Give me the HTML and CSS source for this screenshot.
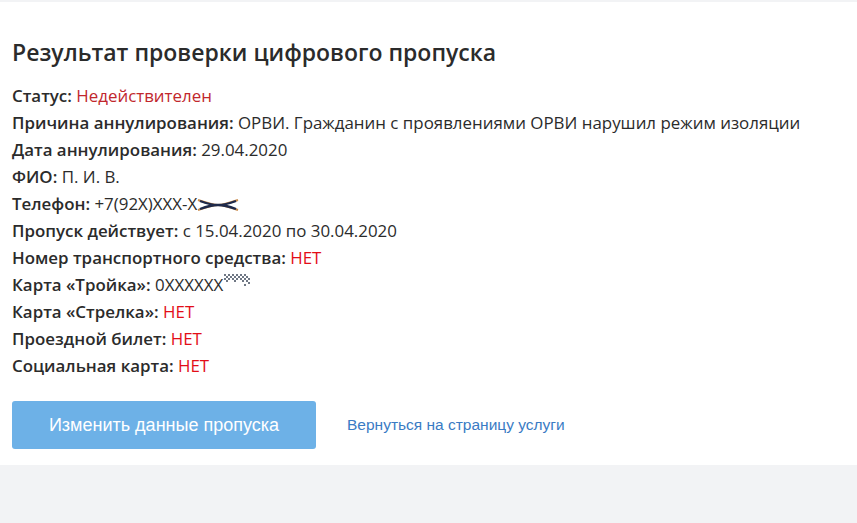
FILE: index.html
```html
<!DOCTYPE html>
<html lang="ru">
<head>
    <meta charset="UTF-8">
    <meta name="viewport" content="width=device-width, initial-scale=1.0">
    <title>Результат проверки цифрового пропуска</title>
    <link rel="stylesheet" href="styles.css">
</head>
<body>
    <div class="card">
        <h1>Результат проверки цифрового пропуска</h1>

        <div class="info">
            <p><b>Статус:</b> <span class="status">Недействителен</span></p>
            <p><b>Причина аннулирования:</b> ОРВИ. Гражданин с проявлениями ОРВИ нарушил режим изоляции</p>
            <p><b>Дата аннулирования:</b> 29.04.2020</p>
            <p><b>ФИО:</b> П. И. В.</p>
            <p><b>Телефон:</b> +7(92X)XXX-X<svg class="scribble" width="42" height="14" viewBox="0 0 42 14">
                    <path d="M1 2 C10 5 16 7 21 7 C16 7 10 9 1 12" fill="none" stroke="#c98a4a" stroke-width="2"/>
                    <path d="M41 2 C32 5 26 7 21 7 C26 7 32 9 41 12" fill="none" stroke="#c98a4a" stroke-width="2"/>
                    <path d="M3 3 C11 6 16 7 21 7 C16 7 11 8 3 11" fill="none" stroke="#1f2a4a" stroke-width="2.4"/>
                    <path d="M39 3 C31 6 26 7 21 7 C26 7 31 8 39 11" fill="none" stroke="#1f2a4a" stroke-width="2.4"/>
                </svg></p>
            <p><b>Пропуск действует:</b> с 15.04.2020 по 30.04.2020</p>
            <p><b>Номер транспортного средства:</b> <span class="no">НЕТ</span></p>
            <p><b>Карта «Тройка»:</b> 0XXXXXX<svg class="noise" width="28" height="14" viewBox="0 0 28 14">
                    <path d="M1 1h2v2h-2zM5 1h2v2h-2zM9 1h2v2h-2zM13 1h2v2h-2zM17 1h2v2h-2zM21 1h2v2h-2zM3 3h2v2h-2zM7 3h2v2h-2zM11 3h2v2h-2zM15 3h2v2h-2zM19 3h2v2h-2zM23 3h2v2h-2zM1 5h2v2h-2zM5 5h2v2h-2zM9 5h2v2h-2zM13 5h2v2h-2zM17 5h2v2h-2zM21 5h2v2h-2zM25 5h2v2h-2zM3 7h2v2h-2zM11 7h2v2h-2zM19 7h2v2h-2zM23 7h2v2h-2zM25 9h2v2h-2zM21 11h2v2h-2z" fill="#6f7784"/>
                </svg></p>
            <p><b>Карта «Стрелка»:</b> <span class="no">НЕТ</span></p>
            <p><b>Проездной билет:</b> <span class="no">НЕТ</span></p>
            <p><b>Социальная карта:</b> <span class="no">НЕТ</span></p>
        </div>

        <div class="actions">
            <button class="btn">Изменить данные пропуска</button>
            <a class="back" href="#">Вернуться на страницу услуги</a>
        </div>
    </div>
</body>
</html>
```

FILE: styles.css
```css
* {
    margin: 0;
    padding: 0;
    box-sizing: border-box;
}
body {
    background-color: #f2f3f5;
    font-family: 'Open Sans', 'Noto Sans', sans-serif;
    color: #2b2b2b;
    min-height: 100vh;
}
.card {
    background-color: #fff;
    margin-top: 2px;
    padding: 35px 12px 16px;
}
h1 {
    font-size: 23px;
    font-weight: 600;
    line-height: 30px;
    color: #2b2b2b;
    margin-bottom: 15px;
}
.info p {
    font-size: 16.9px;
    line-height: 27px;
}
.info b {
    font-weight: 600;
}
.status {
    color: #c1272d;
}
.no {
    color: #e30d17;
}
.scribble {
    vertical-align: middle;
}
.noise {
    vertical-align: 4px;
}
.actions {
    display: flex;
    align-items: center;
    gap: 31px;
    margin-top: 22px;
}
.btn {
    width: 304px;
    height: 48px;
    background-color: #6db1e7;
    color: #fff;
    border: none;
    border-radius: 3px;
    font-family: 'Liberation Sans', Arial, sans-serif;
    font-size: 18px;
    cursor: pointer;
}
.back {
    font-family: 'Liberation Sans', Arial, sans-serif;
    font-size: 15.5px;
    color: #3a7bc4;
    text-decoration: none;
}
```
